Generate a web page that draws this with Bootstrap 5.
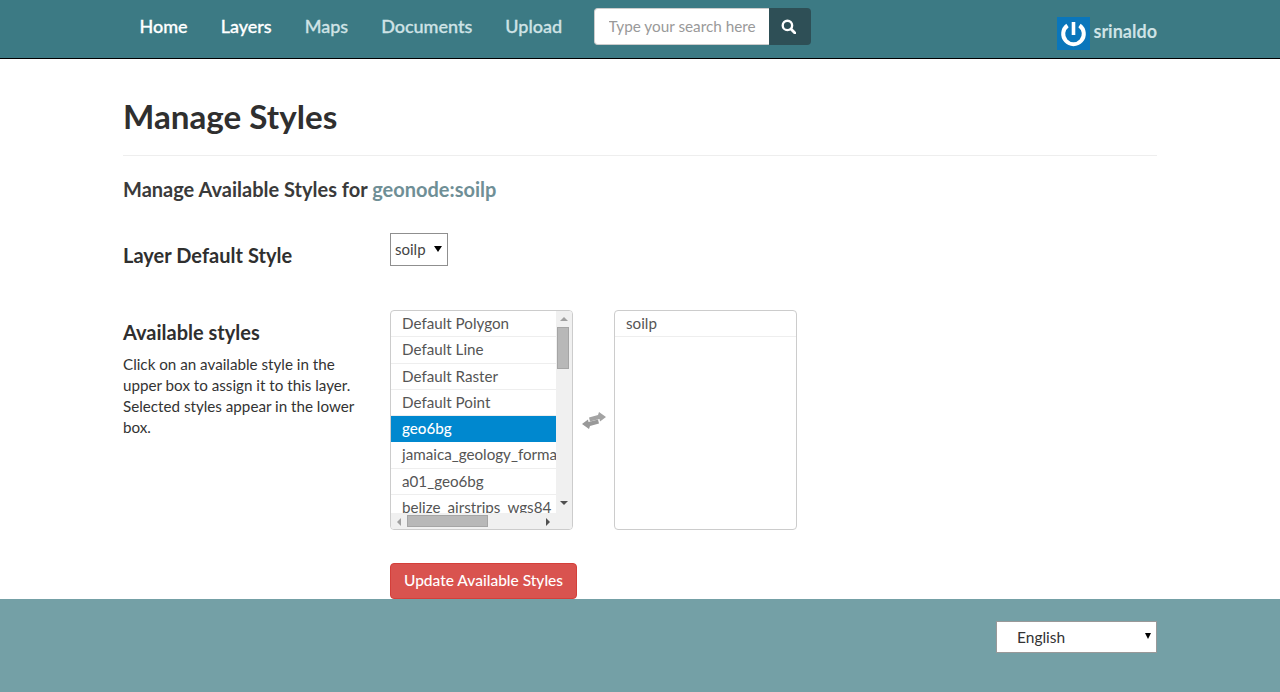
<!DOCTYPE html>
<html lang="en">
<head>
<meta charset="utf-8">
<title>Manage Styles</title>
<link href="https://cdn.jsdelivr.net/npm/bootstrap@5.3.0/dist/css/bootstrap.min.css" rel="stylesheet">
<style>
html,body{height:692px;overflow:hidden}
body{font-family:Lato,"Liberation Sans",sans-serif;font-size:15.2px;color:#2f2f2f;background:#fff;display:flex;flex-direction:column}
.gn-bar{background:#3c7a84;height:59px;border-bottom:1px solid #000;flex:none}
.gn-wrap{width:1034px;margin:0 auto}
.gn-nav{height:53px}
.gn-nav a{font-size:18px;font-weight:500;color:#cfe3e6;text-decoration:none;padding:0 16.5px;-webkit-text-stroke:.3px currentColor}
.gn-nav a.on{color:#fff}
.gn-search{margin:8px 0 0 15px;width:217px;height:37px}
.gn-search input{width:175px;height:37px;border:1px solid #ccc;border-right:0;border-radius:4px 0 0 4px;padding:0 0 2px 14px;font:15.3px Lato,sans-serif;color:#555;background:#fff}
.gn-search input::placeholder{color:#999}
.gn-search button{width:42px;height:37px;border:0;background:#2e4f56;border-radius:0 4px 4px 0;padding:0 2px 3px 0}
.gn-user{margin-left:auto;margin-top:17px;color:#cfe3e6;font-size:18px;font-weight:700;line-height:29px}
.gn-user span{margin-left:3px}
.gn-avatar{width:33px;height:33px;background:#0a76bb;display:block}
.gn-main{flex:1 1 0;min-height:0;overflow:hidden}
.gn-title{font-size:33.2px;font-weight:700;line-height:40px;margin:37px 0 19px;color:#2f2f2f}
.gn-rule{border-top:1px solid #eee;height:0}
.gn-sub{font-size:20px;font-weight:700;line-height:24px;margin:21px 0 32px;color:#3a3a3a}
.gn-sub span{color:#6f8f96}
.gn-row{height:33px}
.gn-label{width:267px;flex:none}
.gn-label-a{padding-top:10px}
.gn-head{font-size:20px;font-weight:700;line-height:24px;margin:0;color:#2f2f2f}
.gn-head-d{margin-top:10px;letter-spacing:.03px}
.gn-pick{width:58px;height:33px;border:1px solid #8f8f8f;padding:0 4px;font-size:15px;color:#444;line-height:30px;position:relative}
.gn-caret{position:absolute;width:0;height:0;border-left:4px solid transparent;border-right:4px solid transparent;border-top:6px solid #000}
.gn-pick .gn-caret{right:5px;top:12px}
.gn-help{line-height:21px;margin:10px 0 0;width:240px;color:#333}
.gn-styles{margin-top:44px}
.gn-box{width:183px;height:220px;border:1px solid #ccc;border-radius:4px;overflow:hidden;position:relative;background:#fff}
.gn-item{height:26.3px;line-height:25px;padding-left:11px;border-bottom:1px solid #eee;color:#555;white-space:nowrap;overflow:hidden}
.gn-item.sel{background:#0088cf;color:#fff;font-weight:500;border-color:#0088cf}
.gn-list{width:165px;height:202px;overflow:hidden}
.gn-vs{position:absolute;right:0;top:0;width:16px;height:218px;background:#f0f0f0}
.gn-vthumb{position:absolute;left:1px;top:16px;width:12px;height:42px;background:#b8b8b8;border:1px solid #a5a5a5}
.gn-hs{position:absolute;left:0;bottom:0;width:165px;height:16px;background:#f0f0f0}
.gn-hthumb{position:absolute;left:16px;top:2px;width:81px;height:12px;background:#b8b8b8;border:1px solid #a5a5a5}
.gn-ar{position:absolute;width:0;height:0}
.gn-ar-u{left:4px;top:6px;border-left:4px solid transparent;border-right:4px solid transparent;border-bottom:4px solid #a0a0a0}
.gn-ar-d{left:4px;top:190px;border-left:4px solid transparent;border-right:4px solid transparent;border-top:4px solid #505050}
.gn-ar-l{left:6px;top:5px;border-top:4px solid transparent;border-bottom:4px solid transparent;border-right:4px solid #a0a0a0}
.gn-ar-r{left:155px;top:5px;border-top:4px solid transparent;border-bottom:4px solid transparent;border-left:4px solid #505050}
.gn-swap{width:41px;flex:none}
.gn-btn{background:#d9534f;border:1px solid #d43f3a;color:#fff;font-size:15.5px;font-weight:500;height:36px;width:187px;border-radius:4px;padding:0 0 1px;margin-top:33px;display:block}
.gn-foot{background:#74a0a6;height:93px;flex:none}
.gn-lang{width:161px;height:32px;background:#fff;border:1px solid #999;line-height:30px;padding-left:20px;font-size:15.5px;color:#333;position:relative;margin:22px 0 0 auto}
.gn-lang .gn-caret{right:5px;top:11px;border-left-width:3.5px;border-right-width:3.5px}
</style>
</head>
<body>
<nav class="gn-bar">
  <div class="gn-wrap d-flex align-items-start">
    <div class="gn-nav d-flex align-items-center">
      <a class="on" href="#">Home</a><a class="on" href="#">Layers</a><a href="#">Maps</a><a href="#">Documents</a><a href="#">Upload</a>
    </div>
    <form class="gn-search d-flex">
      <input type="text" placeholder="Type your search here">
      <button type="button" aria-label="Search"><svg width="15" height="15" viewBox="0 0 14 14"><circle cx="6" cy="6" r="4.4" fill="none" stroke="#fff" stroke-width="2.2"/><path d="M9.3 9.3 13 13" stroke="#fff" stroke-width="2.6" stroke-linecap="round"/></svg></button>
    </form>
    <div class="gn-user d-flex align-items-start">
      <svg class="gn-avatar" viewBox="0 0 33 33"><path d="M10.500 8.500a10.300 10.300 0 1 0 12 0" fill="none" stroke="#fff" stroke-width="4"/><path d="M16.500 5v13" stroke="#fff" stroke-width="3.600"/></svg>
      <span>srinaldo</span>
    </div>
  </div>
</nav>
<main class="gn-main">
  <div class="gn-wrap">
    <h1 class="gn-title">Manage Styles</h1>
    <div class="gn-rule"></div>
    <h2 class="gn-sub">Manage Available Styles for <span>geonode:soilp</span></h2>
    <div class="gn-row d-flex align-items-center">
      <div class="gn-label"><h3 class="gn-head gn-head-d">Layer Default Style</h3></div>
      <div class="gn-pick">soilp<i class="gn-caret"></i></div>
    </div>
    <div class="gn-styles d-flex">
      <div class="gn-label gn-label-a">
        <h3 class="gn-head">Available styles</h3>
        <p class="gn-help">Click on an available style in the upper box to assign it to this layer. Selected styles appear in the lower box.</p>
      </div>
      <div>
        <div class="d-flex">
          <div class="gn-box">
            <div class="gn-list">
              <div class="gn-item">Default Polygon</div>
              <div class="gn-item">Default Line</div>
              <div class="gn-item">Default Raster</div>
              <div class="gn-item">Default Point</div>
              <div class="gn-item sel">geo6bg</div>
              <div class="gn-item">jamaica_geology_formations</div>
              <div class="gn-item">a01_geo6bg</div>
              <div class="gn-item">belize_airstrips_wgs84</div>
            </div>
            <div class="gn-vs">
              <i class="gn-ar gn-ar-u"></i>
              <div class="gn-vthumb"></div>
              <i class="gn-ar gn-ar-d"></i>
            </div>
            <div class="gn-hs">
              <i class="gn-ar gn-ar-l"></i>
              <div class="gn-hthumb"></div>
              <i class="gn-ar gn-ar-r"></i>
            </div>
          </div>
          <div class="gn-swap d-flex align-items-center justify-content-center">
            <svg width="24" height="17" viewBox="0 0 24 17"><path d="M17 0 24 5 18 9.500 17.500 7 8 9.500 7 5.500 16 3Z" fill="#a3a3a3"/><path d="M17 0 24 5 18 9.500 17.500 7 8 9.500 7 5.500 16 3Z" fill="#999" transform="rotate(180 12 8.500)"/></svg>
          </div>
          <div class="gn-box">
            <div class="gn-item">soilp</div>
          </div>
        </div>
        <button type="button" class="gn-btn">Update Available Styles</button>
      </div>
    </div>
  </div>
</main>
<footer class="gn-foot">
  <div class="gn-wrap">
    <div class="gn-lang">English<i class="gn-caret"></i></div>
  </div>
</footer>
</body>
</html>
